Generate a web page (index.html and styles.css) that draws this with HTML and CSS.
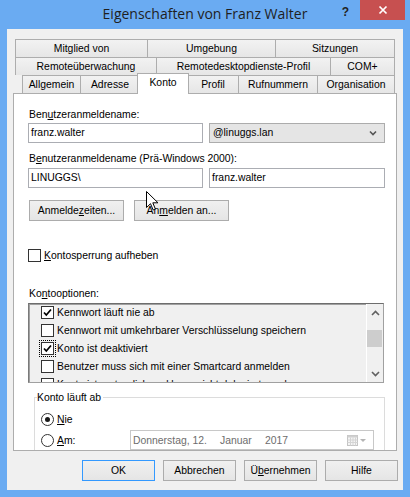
FILE: index.html
```html
<!DOCTYPE html>
<html lang="de">
<head>
<meta charset="utf-8">
<title>Eigenschaften von Franz Walter</title>
<link rel="stylesheet" href="styles.css">
</head>
<body>
<div class="titlebar">
  <div class="title">Eigenschaften von Franz Walter</div>
  <div class="controls">
    <span class="help">?</span>
    <span class="close"><svg width="10" height="10" viewBox="0 0 10 10"><path d="M1.5 1.5L8.5 8.5M8.5 1.5L1.5 8.5" stroke="#fff" stroke-width="1.7"/></svg></span>
  </div>
</div>
<div class="client">
  <div class="tabs">
    <div class="tabrow row1"><div class="tab">Mitglied von</div><div class="tab">Umgebung</div><div class="tab">Sitzungen</div></div>
    <div class="tabrow row2"><div class="tab">Remoteüberwachung</div><div class="tab">Remotedesktopdienste-Profil</div><div class="tab">COM+</div></div>
    <div class="tabrow row3"><div class="tab">Allgemein</div><div class="tab">Adresse</div><div class="tab sel">Konto</div><div class="tab">Profil</div><div class="tab">Rufnummern</div><div class="tab">Organisation</div></div>
    <div class="page">
      <div class="label l1">Ben<u>u</u>tzeranmeldename:</div>
      <div class="fieldrow f1">
        <div class="edit">franz.walter</div>
        <div class="combo"><span>@linuggs.lan</span><svg width="8" height="6" viewBox="0 0 8 6"><path d="M1 1.5L4 4.5L7 1.5" fill="none" stroke="#555" stroke-width="1.6"/></svg></div>
      </div>
      <div class="label l2">B<u>e</u>nutzeranmeldename (Prä-Windows 2000):</div>
      <div class="fieldrow f2">
        <div class="edit">LINUGGS\</div>
        <div class="edit wide">franz.walter</div>
      </div>
      <div class="btnrow">
        <div class="btn">Anmelde<u>z</u>eiten...</div>
        <div class="btn">An<u>m</u>elden an...</div>
      </div>
      <div class="check unlock"><span class="box"></span><span><u>K</u>ontosperrung aufheben</span></div>
      <div class="label l3">Ko<u>n</u>tooptionen:</div>
      <div class="list">
        <div class="items">
          <div class="item"><span class="box"><svg width="11" height="11" viewBox="0 0 11 11"><path d="M2 5.5L4.3 8L9 2.5" fill="none" stroke="#000" stroke-width="1.7"/></svg></span>Kennwort läuft nie ab</div>
          <div class="item"><span class="box"></span>Kennwort mit umkehrbarer Verschlüsselung speichern</div>
          <div class="item"><span class="box focus"><svg width="11" height="11" viewBox="0 0 11 11"><path d="M2 5.5L4.3 8L9 2.5" fill="none" stroke="#000" stroke-width="1.7"/></svg></span>Konto ist deaktiviert</div>
          <div class="item"><span class="box"></span>Benutzer muss sich mit einer Smartcard anmelden</div>
          <div class="item"><span class="box"></span>Konto ist vertraulich und kann nicht delegiert werden</div>
        </div>
        <div class="scrollbar">
          <div class="sbtn"><svg width="9" height="6" viewBox="0 0 9 6"><path d="M1 5L4.5 1.5L8 5" fill="none" stroke="#606060" stroke-width="1.6"/></svg></div>
          <div class="track"><div class="thumb"></div></div>
          <div class="sbtn"><svg width="9" height="6" viewBox="0 0 9 6"><path d="M1 1L4.5 4.5L8 1" fill="none" stroke="#606060" stroke-width="1.6"/></svg></div>
        </div>
      </div>
      <fieldset class="group">
        <legend>Konto läuft ab</legend>
        <div class="radiorow nie"><span class="radio on"></span><span><u>N</u>ie</span></div>
        <div class="radiorow am"><span class="radio"></span><span class="amlabel"><u>A</u>m:</span>
          <div class="date">
            <span class="d1">Donnerstag, 12.</span><span class="d2">Januar</span><span>2017</span>
            <span class="cal"><svg width="11" height="11" viewBox="0 0 11 11"><rect x="0.5" y="0.5" width="10" height="10" fill="#f4f4f4" stroke="#c4c4c4"/><rect x="0.5" y="0.5" width="10" height="2" fill="#d0d0d0"/><path d="M0.5 5H10.5M0.5 7.5H10.5M3.5 2.5V10.5M6 2.5V10.5M8.5 2.5V10.5" stroke="#d4d4d4" stroke-width="1"/></svg><svg width="8" height="5" viewBox="0 0 8 5"><path d="M1 1H7L4 4Z" fill="#b4b4b4"/></svg></span>
          </div>
        </div>
      </fieldset>
    </div>
  </div>
  <div class="buttons">
    <div class="btn def">OK</div>
    <div class="btn">Abbrechen</div>
    <div class="btn">Ü<u>b</u>ernehmen</div>
    <div class="btn">Hilfe</div>
  </div>
</div>
<svg class="cursor" width="13" height="21" viewBox="0 0 13 21"><path d="M0.5 0.5L0.5 16.5L4.5 12.7L7.2 19L9.4 18L6.8 11.8L12 11.8Z" fill="#fff" stroke="#000" stroke-width="1" stroke-linejoin="round"/></svg>
</body>
</html>
```
FILE: styles.css
```css
* { box-sizing: border-box; }
html, body { margin: 0; padding: 0; }
body {
  width: 410px;
  height: 497px;
  overflow: hidden;
  position: relative;
  background: #6aabf2;
  font-family: "Liberation Sans", Arial, sans-serif;
  font-size: 10.4px;
  color: #000;
}
u { text-decoration: underline; text-underline-offset: 1px; }

/* title bar */
.titlebar { height: 29px; display: grid; }
.title, .controls { grid-area: 1 / 1; }
.title {
  font-family: "Open Sans", "Noto Sans", sans-serif;
  font-size: 14px;
  color: #1f1f1f;
  text-align: center;
  line-height: 28px;
}
.controls { justify-self: end; display: flex; align-items: flex-start; }
.help { font-weight: bold; font-size: 12px; line-height: 12px; margin: 6px 11px 0 0; color: #222; }
.close {
  width: 45px; height: 20px; margin-right: 5px;
  background: #c75050;
  display: flex; align-items: center; justify-content: center;
}

/* client */
.client {
  margin: 0 7px;
  height: 461px;
  background: #f0f0f0;
  padding: 10px 6px 0;
}

/* tabs */
.tabrow { display: grid; height: 18px; }
.row1 { margin-left: 2px; grid-template-columns: 132px 128px 120px; }
.row2 { margin-left: 2px; grid-template-columns: 141px 174px 65px; }
.row3 { margin-left: 9px; grid-template-columns: 58px 59px 48px 51px 79px 78px; }
.tab {
  border: 1px solid #adadad;
  border-bottom: 0;
  border-right: 0;
  background: linear-gradient(#f2f2f2, #e6e6e6);
  text-align: center;
  line-height: 17px;
  white-space: nowrap;
}
.tab:last-child { border-right: 1px solid #adadad; }
.tab.sel {
  background: #fff;
  margin: -2px -2px -1px;
  border-right: 1px solid #adadad;
  position: relative;
  z-index: 1;
}

.page {
  height: 358px;
  border: 1px solid #adadad;
  background: #fff;
  padding: 0 11px 0 14px;
  overflow: hidden;
}

.label { line-height: 13px; padding-left: 1px; white-space: nowrap; }
.l1 { margin-top: 14px; }
.l2 { margin-top: 9px; }
.l3 { margin-top: 25px; }

.fieldrow { display: flex; gap: 6px; height: 20px; }
.f1 { margin-top: 2px; }
.f2 { margin-top: 3px; }
.edit {
  width: 175px; height: 20px;
  border: 1px solid #abadb3;
  background: #fff;
  padding-left: 2px;
  line-height: 18px;
}
.edit.wide { width: 176px; }
.combo {
  width: 176px; height: 20px;
  border: 1px solid #acacac;
  background: #e5e5e5;
  padding: 0 7px 0 3px;
  line-height: 18px;
  display: flex; align-items: center; justify-content: space-between;
}

.btnrow { display: flex; gap: 10px; margin: 12px 0 0 1px; }
.btn {
  width: 95px; height: 21px;
  border: 1px solid #acacac;
  background: linear-gradient(#f0f0f0, #e5e5e5);
  text-align: center;
  line-height: 19px;
}

.check { display: flex; align-items: center; gap: 3px; height: 13px; }
.unlock { margin-top: 28px; }
.box {
  width: 13px; height: 13px; flex: none;
  border: 1px solid #333;
  background: #fff;
  display: flex; align-items: center; justify-content: center;
}
.box.focus { outline: 1px dotted #000; outline-offset: 1px; }

.list {
  margin-top: 3px;
  width: 356px; height: 80px;
  border: 1px solid #a0a0a0;
  border-top-color: #6d6d6d;
  border-left-color: #7a7a7a;
  box-shadow: inset 1px 1px 0 #a0a0a0;
  background: #f0f0f0;
  display: flex;
  overflow: hidden;
}
.items { flex: 1; padding: 0 0 0 12px; margin-top: -1px; }
.item { display: flex; align-items: center; gap: 3px; height: 18px; white-space: nowrap; }
.scrollbar {
  width: 17px; flex: none;
  border-left: 1px solid #fff;
  display: flex; flex-direction: column;
  background: #f0f0f0;
}
.sbtn { height: 17px; display: flex; align-items: center; justify-content: center; }
.track { flex: 1; padding-top: 9px; }
.thumb { height: 17px; margin: 0 1px 0 0; background: #cdcdcd; }

.group {
  margin: 8px 0 0 6px;
  padding: 0 0 0 6px;
  border: 1px solid #dcdcdc;
  min-width: 0;
  height: 80px;
}
.group legend { margin-left: -4px; padding: 0 2px 0 0; line-height: 13px; }
.radiorow { display: flex; align-items: center; gap: 3px; }
.nie { margin-top: 9px; height: 13px; }
.am { margin-top: 4px; height: 20px; }
.radio {
  width: 13px; height: 13px; flex: none;
  border: 1px solid #333;
  border-radius: 50%;
  background: #fff;
  display: flex; align-items: center; justify-content: center;
}
.radio.on::after { content: ""; width: 5px; height: 5px; border-radius: 50%; background: #1a1a1a; }
.amlabel { width: 70px; }
.date {
  width: 244px; height: 20px;
  border: 1px solid #c8c8c8;
  background: #fff;
  color: #6d6d6d;
  display: flex; align-items: center;
  padding-left: 2px;
}
.d1 { width: 87px; }
.d2 { width: 45px; }
.cal { margin-left: auto; margin-right: 6px; display: flex; align-items: center; gap: 1px; }

.buttons { display: flex; justify-content: flex-end; gap: 8px; margin: 9px -1px 0 0; }
.buttons .btn { width: 73px; }
.btn.def { border-color: #3399ff; }

.cursor { position: absolute; left: 146px; top: 191px; }
```
